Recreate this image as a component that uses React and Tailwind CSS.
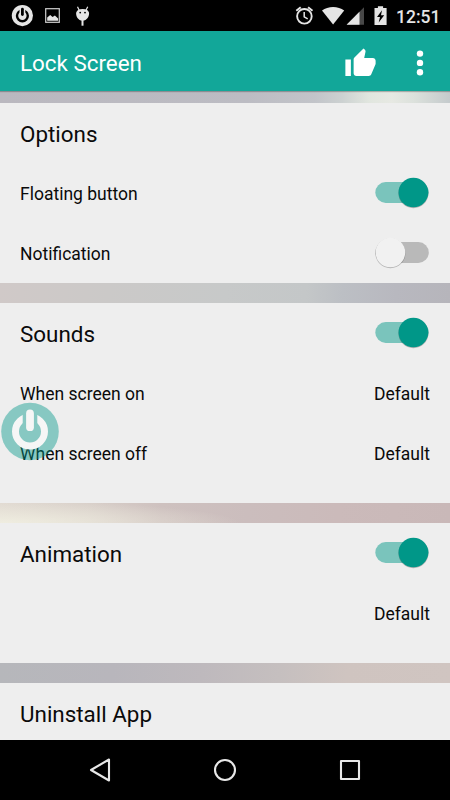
import { useState } from 'react';

function Switch({ checked, onChange, label }) {
  return (
    <button
      role="switch"
      aria-checked={checked}
      aria-label={label}
      onClick={onChange}
      className="-mt-[2px] flex h-[30px] w-[55px] items-center"
    >
      <svg viewBox="0 0 55 32" className="h-8 w-[55px] overflow-visible">
        <rect x="0.3" y="6.1" width="53.5" height="20.8" rx="10.4" fill={checked ? '#7ac4bc' : '#b9b9b9'} />
        <circle cx={checked ? 38.4 : 15.4} cy="17.2" r="15" fill="#000" fillOpacity="0.25" />
        <circle cx={checked ? 38.4 : 15.4} cy="16.5" r="14.8" fill={checked ? '#009788' : '#f1f1f1'} />
      </svg>
    </button>
  );
}

function Section({ children, className }) {
  return <section className={`w-full bg-[#eeeeee] px-5 ${className}`}>{children}</section>;
}

function Row({ label, large, children }) {
  return (
    <div className="flex h-[60px] items-center justify-between">
      <span className={large ? 'pt-[4px] text-[22.4px]' : 'pt-[2px] text-[17.5px]'}>{label}</span>
      {children}
    </div>
  );
}

function Value({ children }) {
  return <span className="pt-[2px] text-[17.5px]">{children}</span>;
}

function StatusBar() {
  return (
    <div className="flex h-[31px] w-full shrink-0 bg-black">
      <svg width="280" height="31" viewBox="0 0 280 31" fill="#e5e5e5">
        {/* power */}
        <circle cx="22.4" cy="15.6" r="10.6" />
        <circle cx="22.4" cy="15.8" r="5.4" fill="none" stroke="#000" strokeWidth="2.4" />
        <rect x="19.5" y="8" width="5.8" height="7" />
        <path d="M22.4 9.2v5.4" stroke="#000" strokeWidth="2.8" strokeLinecap="round" />
        {/* screenshot */}
        <rect x="45.7" y="8.7" width="13.6" height="13.6" fill="none" stroke="#cfcfcf" strokeWidth="1.2" />
        <path d="M47.2 20.7v-3.2l3-2.4 2.4 2 2.3-1.5 3.2 2.8v2.3z" />
        {/* debug head */}
        <path d="M76.2 12.5C77 10 79 8.9 82.6 8.9s5.6 1.1 6.4 3.6c.6 3.5-2 8.2-6.4 8.2s-7-4.7-6.4-8.2z" />
        <path d="M79.2 10.2 77.5 6.7M86 10.2 87.7 6.7" stroke="#e5e5e5" strokeWidth="1.2" />
        <path d="M82.5 20v5.7" stroke="#e5e5e5" strokeWidth="2" />
        <circle cx="80.2" cy="12.6" r="0.9" fill="#000" />
        <circle cx="85" cy="12.6" r="0.9" fill="#000" />
      </svg>
      <svg width="116" height="31" viewBox="280 0 116 31" fill="#e5e5e5">
        {/* alarm */}
        <circle cx="304.4" cy="16.3" r="7.3" fill="none" stroke="#e5e5e5" strokeWidth="1.9" />
        <path d="M304.2 12v4.8l3.5 2.1" fill="none" stroke="#e5e5e5" strokeWidth="1.5" />
        <path d="m296.3 10.8 4.4-3.6M312.5 10.8l-4.4-3.6" stroke="#e5e5e5" strokeWidth="1.9" />
        {/* wifi */}
        <path d="M322 10.5c6-4.7 16.2-4.7 22.2 0L333.1 24.6z" />
        {/* signal */}
        <path d="M364 7.3V24.7H346.6z" fill="#484848" />
        <path d="M359.5 11.8V24.7H346.6z" />
        {/* battery */}
        <path d="M377.9 6.2h5.2v1.9h3.5V25h-12.1V8.1h3.4z" />
        <path d="m382 10.3-5 6.7h3l-1.3 5.4 5.5-7.2h-3.2z" fill="#000" />
      </svg>
      <span className="mt-[7px] text-[17.5px] leading-5 font-medium text-[#e5e5e5]">12:51</span>
    </div>
  );
}

function NavBar() {
  return (
    <nav className="flex h-[60px] w-full shrink-0 items-center bg-black">
      <svg width="450" height="60" viewBox="0 0 450 60" fill="none" stroke="#e8e8e8" strokeWidth="2.1" strokeLinejoin="round">
        <path d="M109 19.5v21L91 30z" />
        <circle cx="225" cy="30" r="10" />
        <rect x="341" y="21" width="18" height="18" />
      </svg>
    </nav>
  );
}

export default function App() {
  const [settings, setSettings] = useState({
    floating: true,
    notification: false,
    sounds: true,
    animation: true,
  });

  const toggle = (key) => setSettings({ ...settings, [key]: !settings[key] });

  return (
    <div className="relative flex h-[800px] w-[450px] flex-col overflow-hidden bg-black font-['Roboto',sans-serif] text-[#0a0a0a]">
      <StatusBar />

      <header className="z-10 flex h-[60px] shrink-0 items-center justify-between bg-[#12a799] pl-5 text-white shadow-[0_1px_1px_rgba(0,0,0,0.25)]">
        <h1 className="pt-[5px] text-[22.4px]">Lock Screen</h1>
        <div className="flex items-center">
          <svg width="33" height="33" viewBox="0 0 24 24" fill="currentColor" className="mt-[4px] mr-[39px]">
            <path d="M1 21h4V9H1v12zm22-11c0-1.1-.9-2-2-2h-6.31l.95-4.57.03-.32c0-.41-.17-.79-.44-1.06L14.17 1 7.59 7.59C7.22 7.95 7 8.45 7 9v10c0 1.1.9 2 2 2h9c.83 0 1.54-.5 1.84-1.22l3.02-7.05c.09-.23.14-.47.14-.73v-2z" />
          </svg>
          <svg width="8" height="28" viewBox="0 0 8 28" fill="currentColor" className="mt-[4px] mr-[26px]">
            <circle cx="4" cy="4.6" r="3.2" />
            <circle cx="4" cy="13.9" r="3.2" />
            <circle cx="4" cy="23.2" r="3.2" />
          </svg>
        </div>
      </header>

      <main className="flex flex-1 flex-col overflow-hidden">
        <div className="h-3 shrink-0 bg-[linear-gradient(90deg,#bab8bf_0%,#bcbcc3_55%,#c2c4c9_70%,#ccd1d1_76%,#e1e6df_82%,#e7e9e3_87%,#dce1dc_92%,#c4cacc_100%)]" />
        <Section className="h-[180px] shrink-0">
          <Row label="Options" large />
          <Row label="Floating button">
            <Switch label="Floating button" checked={settings.floating} onChange={() => toggle('floating')} />
          </Row>
          <Row label="Notification">
            <Switch label="Notification" checked={settings.notification} onChange={() => toggle('notification')} />
          </Row>
        </Section>

        <div className="h-5 shrink-0 bg-[linear-gradient(92deg,#d0c9c8_0%,#cbc9c8_24%,#c7c9c9_50%,#c4c7c8_68%,#bcbfc4_76%,#b8b8bf_88%,#b6b5bb_100%)]" />
        <Section className="h-[200px] shrink-0">
          <Row label="Sounds" large>
            <Switch label="Sounds" checked={settings.sounds} onChange={() => toggle('sounds')} />
          </Row>
          <Row label="When screen on">
            <Value>Default</Value>
          </Row>
          <Row label="When screen off">
            <Value>Default</Value>
          </Row>
        </Section>

        <div className="h-5 shrink-0 bg-[radial-gradient(ellipse_240px_22px_at_0%_100%,#efede0,rgba(238,236,222,0)),linear-gradient(90deg,#e0d9d1_0%,#d8cfc9_20%,#cec1bf_36%,#cbbdbd_55%,#cbbaba_75%,#c9b8b8_100%)]" />
        <Section className="h-[140px] shrink-0">
          <Row label="Animation" large>
            <Switch label="Animation" checked={settings.animation} onChange={() => toggle('animation')} />
          </Row>
          <Row label="">
            <Value>Default</Value>
          </Row>
        </Section>

        <div className="h-5 shrink-0 bg-[linear-gradient(95deg,#b6b7bb_0%,#b8b6bc_25%,#beb9bd_45%,#c5bfbf_62%,#cfc4c0_77%,#d0c5c1_100%)]" />
        <Section className="flex-1">
          <Row label="Uninstall App" large />
        </Section>
      </main>

      <NavBar />

      {/* Floating lock button, sits above the list */}
      <button aria-label="Lock" className="absolute top-[402px] left-px z-20">
        <svg width="58" height="59" viewBox="0 0 58 59">
          <mask id="ring-gap" maskUnits="userSpaceOnUse" x="0" y="0" width="58" height="59">
            <rect width="58" height="59" fill="#fff" />
            <rect x="21.7" y="8" width="14.6" height="20" fill="#000" />
          </mask>
          <circle cx="29" cy="29.5" r="28.8" fill="#009788" fillOpacity="0.43" />
          <circle cx="29" cy="29.5" r="14.5" fill="none" stroke="#f6f6f6" strokeWidth="7" mask="url(#ring-gap)" />
          <path d="M29 11.5v13.7" stroke="#f6f6f6" strokeWidth="7.8" strokeLinecap="round" />
        </svg>
      </button>
    </div>
  );
}
